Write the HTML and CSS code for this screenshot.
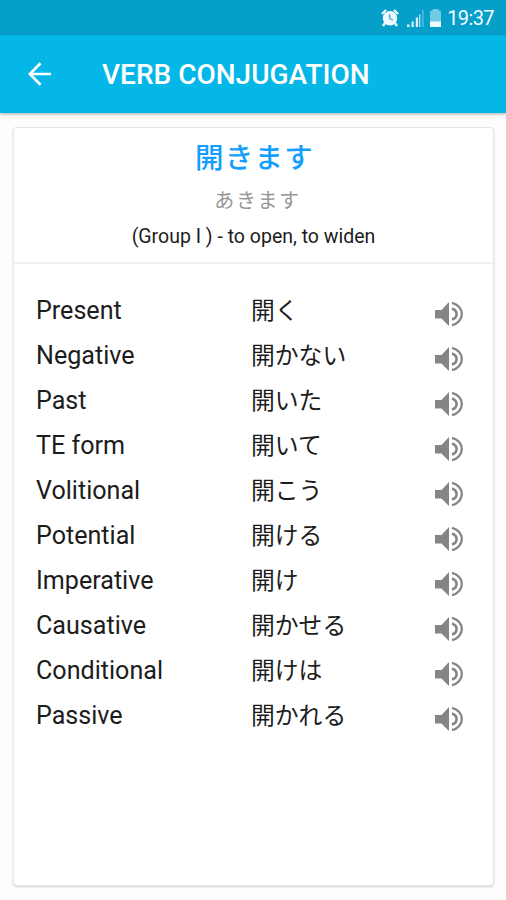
FILE: index.html
```html
<!DOCTYPE html>
<html lang="en">
<head>
<meta charset="utf-8">
<title>Verb Conjugation</title>
<link rel="stylesheet" href="styles.css">
</head>
<body>
<svg class="defs" aria-hidden="true"><symbol id="speaker" viewBox="0 0 28 26"><path d="M0 9H6.5L14 1V25L6.5 17.5H0Z" fill="#858585"/><path d="M17 7.4Q21.6 9 21.6 13T17 18.6" fill="none" stroke="#858585" stroke-width="2.6"/><path d="M17 1.9C23 3.3 26.8 7.8 26.8 13S23 22.7 17 24.1" fill="none" stroke="#858585" stroke-width="2.3"/></symbol></svg>
<div class="statusbar">
<svg class="alarm" viewBox="0 0 18 18"><path d="M1 5L5 1M13 1L17 5M4 14L2 17M14 14L16 17" stroke="#eefaff" stroke-width="2.4"/><circle cx="9" cy="9.3" r="7.2" fill="#eefaff"/><path d="M8.7 5.2V9.6L12 11.2" fill="none" stroke="#42b8da" stroke-width="1.5"/></svg>
<svg class="signal" viewBox="0 0 17 17"><path d="M0 17V14.5H2.5V17ZM4.5 17V11.5H6.7V17ZM8.8 17V7.5H11V17Z" fill="#d5f2fa"/><path d="M12 17V4.5H13.4V17Z" fill="#a5e0f0"/><path d="M15.2 17V0H16.5V17Z" fill="#5cc3df"/></svg>
<svg class="battery" viewBox="0 0 11 18"><path d="M0 18V3Q0 1.5 2 1.5L3 0H8L9 1.5Q11 1.5 11 3V18Z" fill="#71cbe2"/><path d="M0 12.5H11V18H0Z" fill="#f2fcff"/></svg>
<span class="time">19:37</span>
</div>
<header class="appbar">
<svg class="back" viewBox="0 0 24 24"><path d="M23 12H2M12.5 1.3L1.8 12L12.5 22.7" fill="none" stroke="#fff" stroke-width="2.7"/></svg>
<h1>VERB CONJUGATION</h1>
</header>
<main class="card">
<section class="summary">
<div class="verb" lang="ja">開きます</div>
<div class="reading" lang="ja">あきます</div>
<div class="meaning">(Group I ) - to open, to widen</div>
</section>
<section class="forms">
<div class="row"><span>Present</span><span class="jp" lang="ja">開く</span><svg class="speaker"><use href="#speaker"/></svg></div>
<div class="row"><span>Negative</span><span class="jp" lang="ja">開かない</span><svg class="speaker"><use href="#speaker"/></svg></div>
<div class="row"><span>Past</span><span class="jp" lang="ja">開いた</span><svg class="speaker"><use href="#speaker"/></svg></div>
<div class="row"><span>TE form</span><span class="jp" lang="ja">開いて</span><svg class="speaker"><use href="#speaker"/></svg></div>
<div class="row"><span>Volitional</span><span class="jp" lang="ja">開こう</span><svg class="speaker"><use href="#speaker"/></svg></div>
<div class="row"><span>Potential</span><span class="jp" lang="ja">開ける</span><svg class="speaker"><use href="#speaker"/></svg></div>
<div class="row"><span>Imperative</span><span class="jp" lang="ja">開け</span><svg class="speaker"><use href="#speaker"/></svg></div>
<div class="row"><span>Causative</span><span class="jp" lang="ja">開かせる</span><svg class="speaker"><use href="#speaker"/></svg></div>
<div class="row"><span>Conditional</span><span class="jp" lang="ja">開けは</span><svg class="speaker"><use href="#speaker"/></svg></div>
<div class="row"><span>Passive</span><span class="jp" lang="ja">開かれる</span><svg class="speaker"><use href="#speaker"/></svg></div>
</section>
</main>
</body>
</html>
```
FILE: styles.css
```css
* { box-sizing: border-box; }
body {
  margin: 0;
  height: 900px;
  overflow: hidden;
  background: #fdfdfd;
  color: #1c1c1c;
  font-family: Roboto, "Noto Sans CJK JP", sans-serif;
  display: flex;
  flex-direction: column;
}
svg { display: block; flex: none; }
.defs { position: absolute; width: 0; height: 0; }
.statusbar {
  height: 35px;
  background: #059fca;
  display: flex;
  align-items: center;
  justify-content: flex-end;
  padding: 1px 12px 0 0;
}
.alarm { width: 18px; height: 18px; margin-right: 8px; }
.signal { width: 17px; height: 17px; margin: 1px 6px 0 0; }
.battery { width: 11px; height: 18px; margin-right: 6px; }
.time { color: #f2fcff; font-size: 20px; letter-spacing: -.6px; line-height: 34px; }
.appbar {
  height: 78px;
  flex: none;
  background: #05b7e7;
  box-shadow: 0 1px 3px rgba(0, 0, 0, .35);
  display: flex;
  align-items: center;
  padding-left: 28px;
}
.back { width: 24px; height: 24px; margin-top: -1px; }
h1 {
  margin: 2px 0 0 50px;
  color: #fff;
  font-size: 28px;
  font-weight: 500;
  line-height: 32px;
  white-space: nowrap;
}
.card {
  margin: 15px 13px 0 14px;
  height: 757px;
  background: #fff;
  border-radius: 3px;
  box-shadow: 0 0 0 1px #e8e8e8, 0 1px 2px 1px rgba(0, 0, 0, .18);
}
.summary {
  height: 136px;
  border-bottom: 2px solid #f0f0f0;
  text-align: center;
}
.verb {
  height: 58px;
  padding: 1px 0 0 2px;
  font-size: 28.5px;
  font-weight: 500;
  line-height: 59px;
  letter-spacing: 1.2px;
  color: #149fff;
}
.reading {
  height: 28px;
  padding-left: 8px;
  font-size: 20px;
  line-height: 30px;
  letter-spacing: 1.6px;
  color: #969696;
}
.meaning {
  font-size: 19.5px;
  line-height: 45px;
}
.forms { padding: 24px 30px 0 22px; }
.row {
  height: 45px;
  display: grid;
  grid-template-columns: 215px 1fr 28px;
  grid-template-rows: 45px;
  align-items: center;
  font-size: 25.1px;
  line-height: 45px;
}
.jp { font-size: 23.8px; line-height: 43px; padding-top: 2px; }
.speaker { width: 28px; height: 26px; margin-top: 7px; }
```
